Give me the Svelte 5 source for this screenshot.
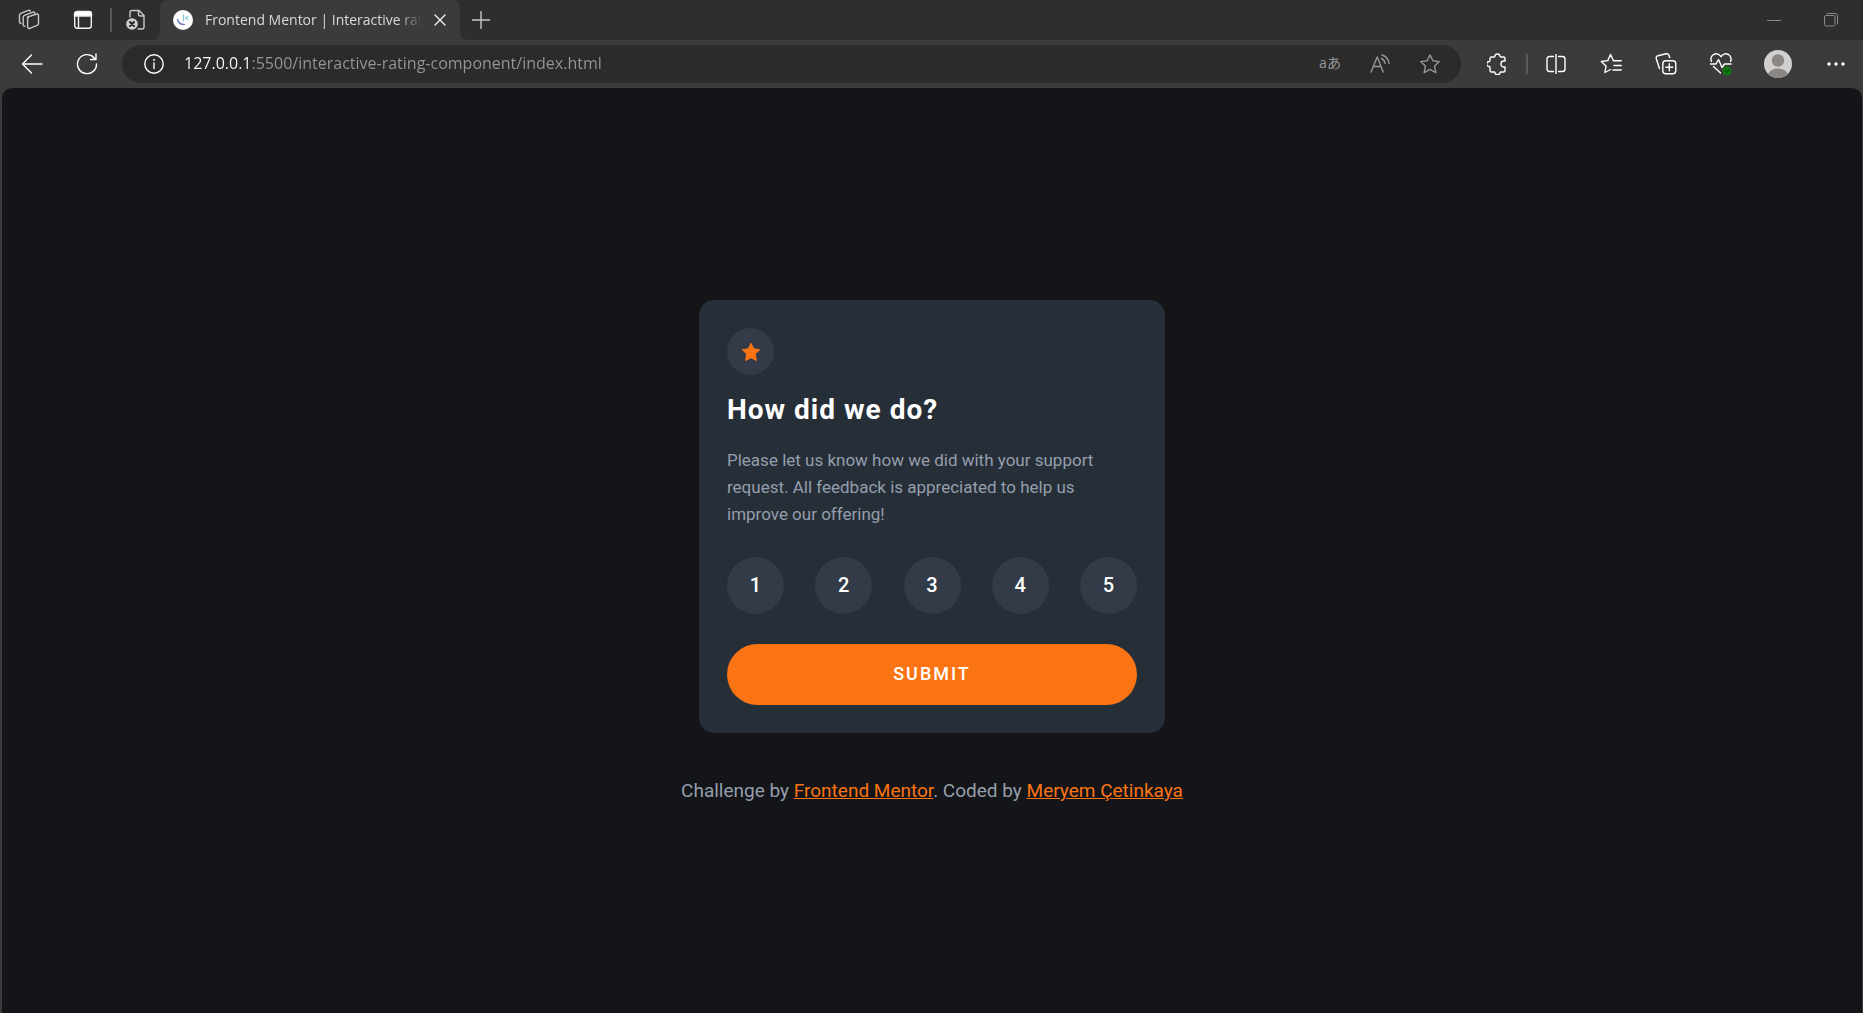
<script>
  const ratings = [1, 2, 3, 4, 5];
  let rating = $state(null);
  let address = $state('127.0.0.1:5500/interactive-rating-component/index.html');
</script>

<div class="browser">
  <header>
    <div class="strip">
      <button class="slot wide" aria-label="Workspaces">
        <svg width="22" height="22" viewBox="0 0 22 22"><path d="M9.3 8.2 18.5 5a1.4 1.4 0 0 1 2 1.3v8.2a2 2 0 0 1-1.3 1.9l-7.600 2.900a1.400 1.400 0 0 1-2-1.300V9.800a2 2 0 0 1 1.300-1.900M6.800 17.200a1.500 1.500 0 0 1-1.600-1.500V8.200a2 2 0 0 1 1.300-1.900l8.400-3.200a1.500 1.500 0 0 1 2 .9M3 14.500a1.500 1.500 0 0 1-1.500-1.500V6.200a2 2 0 0 1 1.300-1.900l7.400-2.900a1.500 1.500 0 0 1 2 .7" /></svg>
      </button>
      <button class="slot wide" aria-label="Tab actions">
        <svg class="bright" width="20" height="20" viewBox="0 0 20 20"><rect x="1.700" y="1.700" width="16.600" height="16.600" rx="2.500" /><path class="solid" d="M1.500 4a2.500 2.500 0 0 1 2.500-2.500h12a2.500 2.500 0 0 1 2.500 2.500v2h-17z" /><path d="M5.500 6v12" /></svg>
      </button>
      <span class="divider"></span>
      <button class="slot" aria-label="Pinned tab">
        <svg width="22" height="22" viewBox="0 0 22 22"><path d="M5 8V3.500A2 2 0 0 1 7 1.500h7l5 5V18a2 2 0 0 1-2 2h-4M13.500 1.500V5a2 2 0 0 0 2 2H19" /><circle class="badge" cx="7" cy="15" r="5.800" /><path class="cross" d="m5 13 4 4m0-4-4 4" /></svg>
      </button>
      <div class="tab">
        <svg class="favicon" width="20" height="20" viewBox="0 0 20 20"><circle cx="10" cy="10" r="10" fill="#fff" stroke="none" /><path d="M4.500 9.500c.8 3 3.500 5 6.800 5" stroke="#6a7cc0" /><path d="M10.500 5v6M15 6.500l-2.500 1.500 2.500 1.500" stroke="#8fcbdc" /></svg>
        <span class="title">Frontend Mentor | Interactive rating component</span>
        <button aria-label="Close tab"><svg class="bright" width="12" height="12" viewBox="0 0 12 12"><path d="m1 1 10 10m0-10L1 11" /></svg></button>
      </div>
      <button class="slot new" aria-label="New tab"><svg width="18" height="18" viewBox="0 0 18 18"><path d="M9 0v18M0 9h18" /></svg></button>
      <div class="window">
        <button aria-label="Minimize"><svg width="14" height="14" viewBox="0 0 14 14"><path d="M0 7.500h14" /></svg></button>
        <button aria-label="Restore"><svg width="14" height="14" viewBox="0 0 14 14"><rect x=".5" y="2.500" width="10.500" height="10.500" rx="1.500" /><path d="M3 .5h8A2.500 2.500 0 0 1 13.500 3v8" /></svg></button>
      </div>
    </div>

    <div class="toolbar">
      <div class="nav">
        <button aria-label="Back"><svg width="22" height="20" viewBox="0 0 22 20"><path d="M10.500 1 1.500 10l9 9M1.500 10H21" /></svg></button>
        <button aria-label="Refresh"><svg width="22" height="22" viewBox="0 0 22 22"><path d="M20.500 11A9.500 9.500 0 1 1 18 4.700l1.500 1.800M20 1v5.500h-5.500" /></svg></button>
      </div>
      <div class="address">
        <svg width="20" height="20" viewBox="0 0 20 20"><circle cx="10" cy="10" r="9.200" /><path d="M10 9v5.500M10 5.500v1" /></svg>
        <input aria-label="Address" bind:value={address} spellcheck="false" />
        <div class="inside">
          <button class="translate" aria-label="Translate" lang="ja">aあ</button>
          <button aria-label="Read aloud"><svg width="20" height="20" viewBox="0 0 20 20"><path d="M1 18 7.200 3l6 15M3.300 12.500H11M11.500 4.500a6 6 0 0 1 3.500 5M12 1a10 10 0 0 1 7 8.500" /></svg></button>
          <button aria-label="Add to favorites"><svg width="22" height="22" viewBox="0 0 22 22"><path d="m11 1.800 2.800 5.900 6.500.9-4.700 4.500 1.200 6.500-5.800-3.200-5.800 3.200 1.200-6.500L1.700 8.600l6.500-.9z" /></svg></button>
        </div>
      </div>
      <div class="tools">
        <button aria-label="Extensions"><svg width="20" height="22" viewBox="0 0 20 22"><path d="M4.500 4H7a1 1 0 0 0 1-1 2.500 2 0 0 1 5 0 1 1 0 0 0 1 1h2.500a1.500 1.500 0 0 1 1.500 1.500V8h-1.500a2.500 3 0 0 0 0 6H18v3.500a1.500 1.500 0 0 1-1.500 1.500H14a1 1 0 0 0-1 .8 2.500 1.800 0 0 1-5 0A1 1 0 0 0 7 19H4.500A1.500 1.500 0 0 1 3 17.500V14.500a1 1 0 0 0-.8-1 2.500 2.500 0 0 1 0-5 1 1 0 0 0 .8-1v-2A1.500 1.500 0 0 1 4.500 4z" /></svg></button>
        <span class="divider"></span>
        <button aria-label="Split screen"><svg width="20" height="20" viewBox="0 0 20 20"><path d="M7.500 2.500H3.500a2.500 2.500 0 0 0-2.500 2.500v10a2.500 2.500 0 0 0 2.500 2.500h4M12.500 2.500h4a2.500 2.500 0 0 1 2.500 2.500v10a2.500 2.500 0 0 1-2.500 2.500h-4M10 0v20" /></svg></button>
        <button aria-label="Favorites"><svg width="22" height="22" viewBox="0 0 22 22"><path d="M13.500 7.500 10.500 1.500 7.800 7.600l-6.500.9 4.700 4.600-1.100 6.400 5.600-3M13 7.800h8.200M14 12.500h7.200M13 17h8.200" /></svg></button>
        <button aria-label="Collections"><svg width="22" height="22" viewBox="0 0 22 22"><rect x="7.800" y="7.800" width="13" height="13" rx="3" /><path d="M14.300 10.800v7M10.800 14.300h7M4.500 15.500 1.300 5.800A2.500 2.500 0 0 1 3 2.700l8-1.900a2.500 2.500 0 0 1 3 1.800l.7 2" /></svg></button>
        <button aria-label="Browser essentials"><svg width="24" height="24" viewBox="0 0 24 24"><path d="M2.500 9.500A5.200 5.200 0 0 1 12 4.700a5.200 5.200 0 0 1 9.500 4.800M1.500 12H7l2.500-4.500 3.500 8 2.500-3.500h6.500M4.500 14.500l7 6.500" /><circle cx="18" cy="19" r="4.500" fill="#107c10" stroke="none" /><path d="m16 19 1.500 1.500 3-3" stroke="#075207" /></svg></button>
        <button class="profile" aria-label="Profile"><svg width="28" height="28" viewBox="0 0 28 28"><clipPath id="face"><circle cx="14" cy="14" r="14" /></clipPath><g clip-path="url(#face)" stroke="none"><path fill="#d2d0ce" d="M0 0h28v28H0z" /><circle cx="14" cy="10.500" r="6.200" fill="#8a8785" /><ellipse cx="14" cy="25.500" rx="10" ry="7" fill="#8a8785" /></g></svg></button>
        <button class="more" aria-label="Settings and more"><svg width="18" height="6" viewBox="0 0 18 6"><g fill="#fff" stroke="none"><circle cx="2" cy="3" r="1.700" /><circle cx="9" cy="3" r="1.700" /><circle cx="16" cy="3" r="1.700" /></g></svg></button>
      </div>
    </div>
  </header>

  <div class="page">
    <main>
      <span class="star">
        <svg width="20" height="20" viewBox="0 0 20 20"><path d="M10 1.300 12.700 6.800 18.700 7.700 14.300 12 15.400 18.500 10 15.700 4.600 18.500 5.700 12 1.300 7.700 7.300 6.800Z" /></svg>
      </span>
      <h1>How did we do?</h1>
      <p>Please let us know how we did with your support request. All feedback is appreciated to help us improve our offering!</p>
      <div class="ratings" role="group" aria-label="Rating">
        {#each ratings as value}
          <button class:chosen={rating === value} aria-pressed={rating === value} onclick={() => (rating = value)}>{value}</button>
        {/each}
      </div>
      <button class="submit">SUBMIT</button>
    </main>
    <footer>Challenge by <a href="#mentor">Frontend Mentor</a>. Coded by <a href="#author">Meryem Çetinkaya</a></footer>
  </div>
</div>

<style>
  :global(body) {
    margin: 0;
    background: #3b3b3b;
  }
  .browser {
    min-height: 100vh;
    display: flex;
    flex-direction: column;
    font-family: "Open Sans", "Noto Sans", sans-serif;
    color: #fff;
  }
  button {
    display: inline-flex;
    align-items: center;
    justify-content: center;
    padding: 0;
    border: 0;
    background: none;
    color: inherit;
    font: inherit;
    cursor: pointer;
  }
  header svg {
    display: block;
    flex: none;
    fill: none;
    stroke: #fff;
    stroke-width: 1.4;
    stroke-linecap: round;
    stroke-linejoin: round;
  }
  .strip {
    display: flex;
    align-items: center;
    height: 40px;
    padding-left: 2px;
    background: #2e2e2e;
  }
  .strip svg {
    stroke: #c8c8c8;
  }
  .strip svg.bright {
    stroke: #f0f0f0;
  }
  .strip .solid {
    fill: #fff;
  }
  .strip .badge {
    fill: #d0d0d0;
    stroke: none;
  }
  .strip .cross {
    stroke: #222;
    stroke-width: 2;
  }
  .slot {
    width: 48px;
    height: 40px;
  }
  .slot.wide {
    width: 54px;
  }
  .slot.new {
    width: 42px;
  }
  .divider {
    width: 2px;
    height: 24px;
    background: #5a5a5a;
  }
  .tab {
    position: relative;
    display: flex;
    align-items: center;
    box-sizing: border-box;
    width: 300px;
    height: 40px;
    padding: 0 14px 0 13px;
    background: #3b3b3b;
    border-radius: 8px 8px 0 0;
    font-size: 14px;
    line-height: 18px;
    color: #d8d8d8;
  }
  /* Flared feet that join the active tab to the toolbar */
  .tab::before,
  .tab::after {
    content: "";
    position: absolute;
    bottom: 0;
    width: 6px;
    height: 6px;
  }
  .tab::before {
    right: 100%;
    background: radial-gradient(circle at 0 0, transparent 5px, #3b3b3b 6px);
  }
  .tab::after {
    left: 100%;
    background: radial-gradient(circle at 100% 0, transparent 5px, #3b3b3b 6px);
  }
  .title {
    flex: 1;
    margin: 0 12px 0 12px;
    overflow: hidden;
    white-space: nowrap;
    mask-image: linear-gradient(to left, transparent, #000 24px);
  }
  .window {
    display: flex;
    margin-left: auto;
  }
  .window button {
    width: 57px;
    height: 40px;
  }
  .window button:last-child {
    margin-right: 4px;
  }
  .window svg {
    stroke: #888;
    stroke-width: 1;
  }
  .toolbar {
    display: flex;
    align-items: center;
    height: 48px;
    background: #3b3b3b;
  }
  .nav {
    display: flex;
    padding: 0 8px 0 4px;
  }
  .nav button,
  .tools button {
    width: 55px;
    height: 40px;
  }
  .address {
    flex: 1;
    display: flex;
    align-items: center;
    height: 38px;
    padding: 0 6px 0 22px;
    border-radius: 19px;
    background: #2b2b2b;
  }
  .address input {
    flex: 1;
    min-width: 0;
    padding: 0 0 2px;
    margin-left: 20px;
    border: 0;
    outline: 0;
    font: inherit;
    font-size: 16px;
    color: transparent;
    caret-color: #fff;
    background: linear-gradient(to right, #fff 68px, #969696 68px);
    background-clip: text;
  }
  .inside {
    display: flex;
  }
  .inside button {
    width: 50px;
    height: 38px;
  }
  .inside svg {
    stroke: #969696;
  }
  .inside .translate {
    padding-bottom: 4px;
    font-family: "Open Sans", "Noto Sans CJK JP", sans-serif;
    font-size: 14px;
    color: #969696;
  }
  .tools {
    display: flex;
    align-items: center;
    padding-left: 8px;
  }
  .tools .divider {
    height: 20px;
    margin-left: 2px;
  }
  .tools .profile {
    width: 60px;
  }
  .page {
    flex: 1;
    display: flex;
    flex-direction: column;
    align-items: center;
    justify-content: center;
    margin: 0 1px 0 2px;
    border-radius: 10px 10px 0 0;
    background: #131518;
    font-family: Roboto, sans-serif;
  }
  main {
    box-sizing: border-box;
    width: 466px;
    max-width: 100%;
    padding: 28px;
    border-radius: 15px;
    background: #262e38;
  }
  .star {
    display: flex;
    align-items: center;
    justify-content: center;
    width: 47px;
    height: 47px;
    border-radius: 50%;
    background: #323b47;
  }
  .star svg {
    fill: #fb7413;
    stroke: #fb7413;
    stroke-linejoin: round;
  }
  h1 {
    margin: 16px 0 19px;
    font-size: 28px;
    line-height: 37px;
    font-weight: 700;
    letter-spacing: 1px;
  }
  p {
    max-width: 380px;
    margin: 0 0 29px;
    font-size: 17px;
    line-height: 27px;
    color: #959eac;
  }
  .ratings {
    display: flex;
    justify-content: space-between;
  }
  .ratings button {
    width: 57px;
    height: 57px;
    padding-bottom: 2px;
    border-radius: 50%;
    background: #323b47;
    font-size: 20px;
    font-weight: 500;
  }
  .ratings .chosen {
    background: #7c8798;
  }
  .submit {
    width: 100%;
    height: 61px;
    margin-top: 30px;
    padding-bottom: 2px;
    border-radius: 31px;
    background: #fb7413;
    font-size: 18px;
    font-weight: 500;
    letter-spacing: 2px;
  }
  footer {
    margin-top: 48px;
    font-size: 19px;
    line-height: 20px;
    color: #959eac;
  }
  a {
    color: #fb7413;
  }
</style>
